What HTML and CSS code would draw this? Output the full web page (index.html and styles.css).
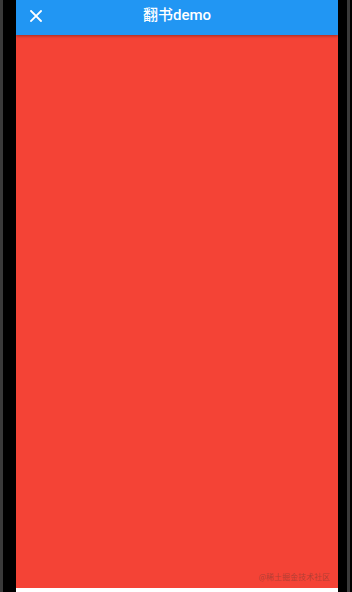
FILE: index.html
```html
<!DOCTYPE html>
<html lang="zh">
<head>
<meta charset="utf-8">
<link rel="stylesheet" href="styles.css">
</head>
<body>
<div class="frame">
  <div class="edge"></div>
  <div class="bezel"></div>
  <div class="screen">
    <header class="appbar">
      <svg class="close" viewBox="0 0 12 12" width="12" height="12"><path d="M1 1L11 11M11 1L1 11" stroke="#fff" stroke-width="1.8" stroke-linecap="square"/></svg>
      <div class="title">翻书demo</div>
    </header>
    <main class="page">
      <span class="wm">@稀土掘金技术社区</span>
    </main>
    <div class="bottom"></div>
  </div>
  <div class="bezel right"></div>
  <div class="edge"></div>
</div>
</body>
</html>
```
FILE: styles.css
```css
html, body { margin: 0; padding: 0; background: #000; }
.frame { display: flex; width: 352px; height: 592px; overflow: hidden; }
.edge { width: 3px; background: #3a3a3a; }
.bezel { width: 13px; background: #000; }
.bezel.right { width: 9px; }
.screen { width: 322px; display: flex; flex-direction: column; position: relative; }
.appbar { height: 35px; background: #2196f3; display: flex; align-items: flex-start; position: relative; box-shadow: 0 1px 3px rgba(0,0,0,0.35); z-index: 1; }
.close { margin-left: 14px; margin-top: 10px; }
.title { position: absolute; left: 0; right: 0; text-align: center; color: #fff; font-family: "Roboto", "Noto Sans CJK SC", sans-serif; font-size: 15px; font-weight: 500; top: 5px; line-height: 20px; }
.page { flex: 1; background: #f44336; position: relative; }
.wm { position: absolute; right: 8px; bottom: 6px; font-family: "Noto Sans CJK SC", sans-serif; font-size: 8px; color: rgba(150,60,50,0.7); }
.bottom { height: 4px; background: #fff; }
```
